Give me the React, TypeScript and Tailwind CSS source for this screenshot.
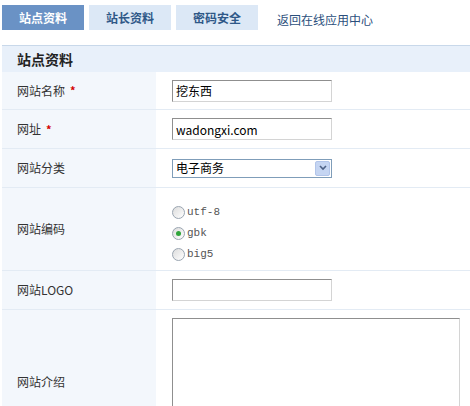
import { useState } from "react";

const cjk = "font-['SimSun','Noto_Sans_CJK_SC',sans-serif]";

function Row({
  label,
  required,
  height,
  children,
}: {
  label: string;
  required?: boolean;
  height: string;
  children: React.ReactNode;
}) {
  return (
    <div className={`flex border-b border-[#e3ebf4] ${height}`}>
      <div className="w-[154px] shrink-0 bg-[#f3f7fc] flex items-center pl-[15px] text-[12px] text-[#333]">
        {label}
        {required && <span className="ml-[5px] text-[#d40000] font-bold text-[11px]">*</span>}
      </div>
      <div className="flex-1 flex items-center pl-4">{children}</div>
    </div>
  );
}

const inputCls =
  "w-[160px] h-[22px] border border-t-[#8f8f8f] border-l-[#8f8f8f] border-b-[#d4d4d4] border-r-[#d4d4d4] px-[3px] text-[12px] text-black outline-none bg-white";

export default function App() {
  const [charset, setCharset] = useState("gbk");

  return (
    <div className={`w-[470px] h-[406px] overflow-hidden bg-white ${cjk}`}>
      {/* tabs */}
      <div className="flex items-start gap-[5px] pl-[2px] pt-[5px] h-[30px]">
        <div className="w-[82px] h-[25px] bg-[#6a92c5] text-white text-[12px] font-bold flex items-center justify-center">
          站点资料
        </div>
        <div className="w-[82px] h-[25px] bg-[#dce8f6] text-[#2f5888] text-[12px] font-bold flex items-center justify-center">
          站长资料
        </div>
        <div className="w-[82px] h-[25px] bg-[#dce8f6] text-[#2f5888] text-[12px] font-bold flex items-center justify-center">
          密码安全
        </div>
        <a className="ml-[14px] mt-[7px] text-[12px] leading-[16px] text-[#2b4f7c] cursor-pointer">返回在线应用中心</a>
      </div>

      {/* section */}
      <div className="mt-[15px] ml-[2px]">
        <div className="h-[27px] bg-[#e8f0fa] border-t border-[#c8d8ea] flex items-center pl-[15px] text-[14px] font-bold text-[#222]">
          站点资料
        </div>

        <Row label="网站名称" required height="h-[38px]">
          <input className={inputCls} defaultValue="挖东西" />
        </Row>
        <Row label="网址" required height="h-[39px]">
          <input className={inputCls} defaultValue="wadongxi.com" />
        </Row>
        <Row label="网站分类" height="h-[39px]">
          <div className="w-[160px] h-[19px] border border-[#7f9db9] bg-white flex items-center justify-between pl-[3px] pr-[1px] text-[12px] text-black">
            <span>电子商务</span>
            <span className="w-[15px] h-[15px] bg-[#c5d5f2] border border-[#b2c5ea] rounded-[2px] flex items-center justify-center">
              <svg width="8" height="6" viewBox="0 0 8 6">
                <path d="M1 1l3 3 3-3" fill="none" stroke="#4d6185" strokeWidth="1.6" />
              </svg>
            </span>
          </div>
        </Row>
        <Row label="网站编码" height="h-[83px]">
          <div className="flex flex-col gap-[8px] pt-[8px]">
            {["utf-8", "gbk", "big5"].map((c) => (
              <label key={c} className="flex items-center gap-[2px] cursor-pointer" onClick={() => setCharset(c)}>
                <span className="w-[13px] h-[13px] rounded-full border border-[#9aa5b1] bg-gradient-to-br from-[#dcdcdc] to-white flex items-center justify-center">
                  {charset === c && <span className="w-[5px] h-[5px] rounded-full bg-[#2fa43a]" />}
                </span>
                <span className="text-[11px] text-[#555] font-['Liberation_Mono','DejaVu_Sans_Mono',monospace] leading-[13px]">
                  {c}
                </span>
              </label>
            ))}
          </div>
        </Row>
        <Row label="网站LOGO" height="h-[39px]">
          <input className={inputCls} defaultValue="" />
        </Row>
        <div className="flex h-[120px]">
          <div className="w-[154px] shrink-0 bg-[#f3f7fc] flex items-center pl-[15px] pt-[24px] text-[12px] text-[#333]">
            网站介绍
          </div>
          <div className="flex-1 pl-4 pt-[8px]">
            <textarea className="w-[288px] h-[110px] border border-t-[#8f8f8f] border-l-[#8f8f8f] border-b-[#d4d4d4] border-r-[#d4d4d4] resize-none outline-none" />
          </div>
        </div>
      </div>
    </div>
  );
}
